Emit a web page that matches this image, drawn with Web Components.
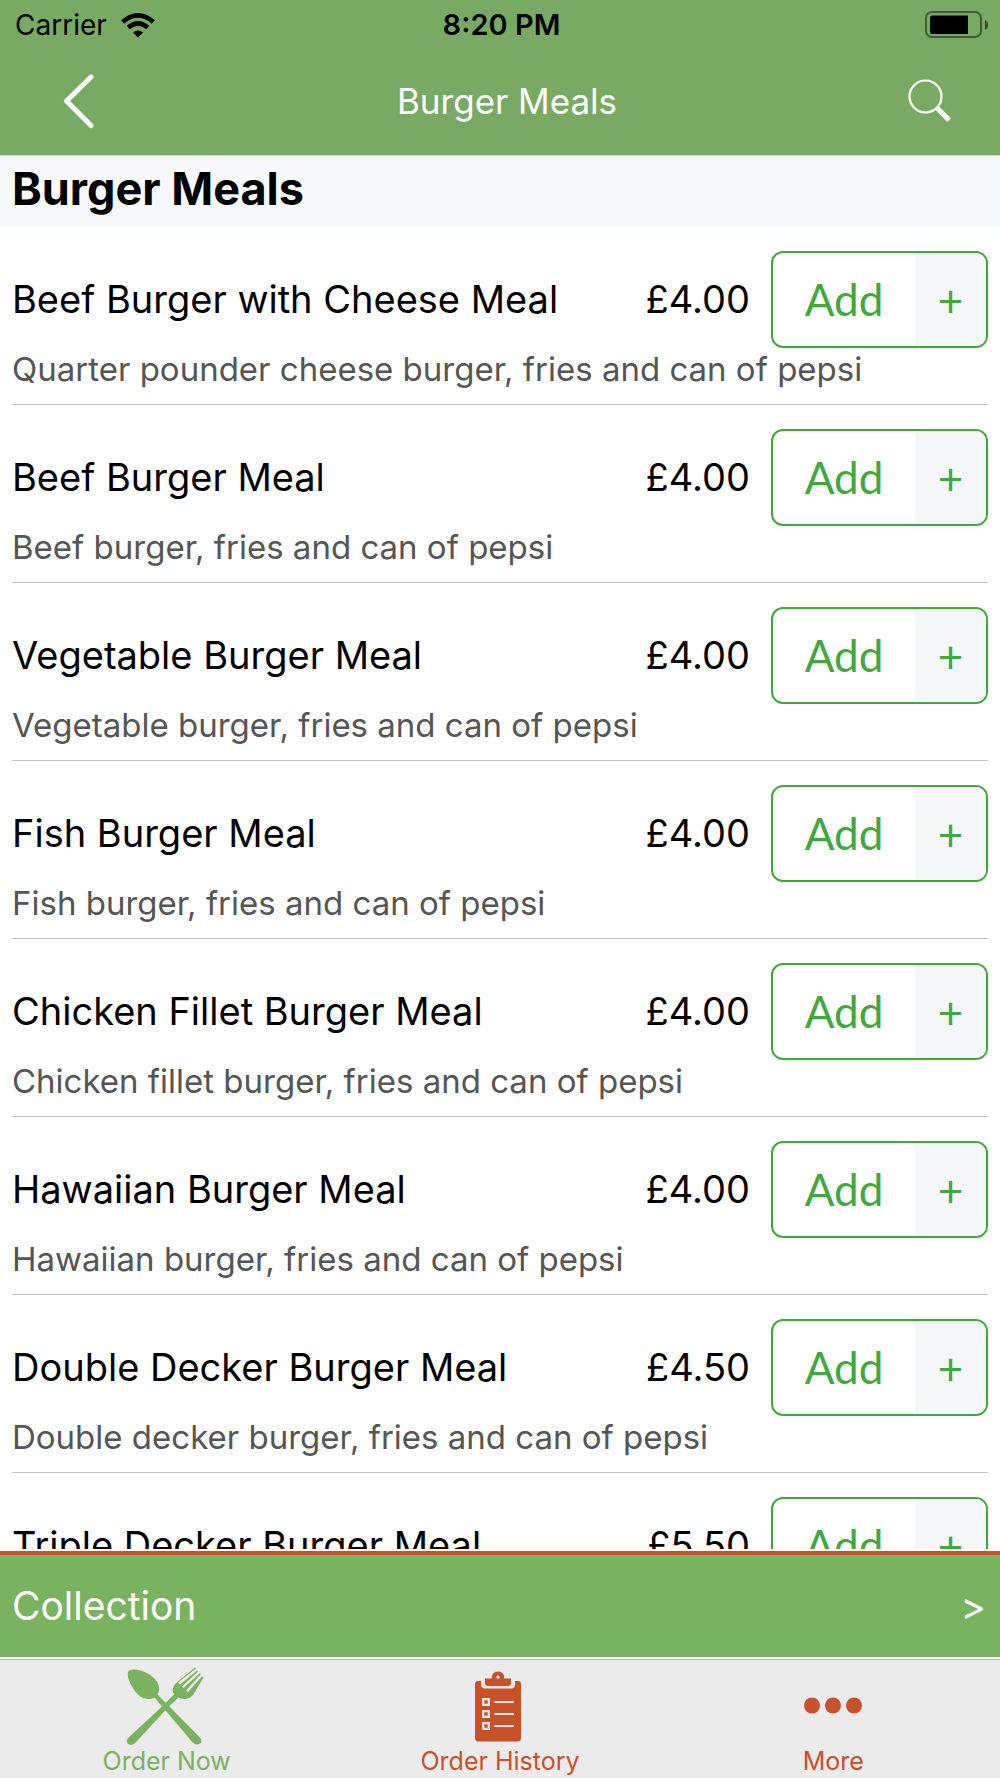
<!DOCTYPE html>
<html lang="en">
<head>
<meta charset="utf-8">
<meta name="viewport" content="width=device-width, initial-scale=1">
<title>Burger Meals</title>
<style>
  html, body { margin: 0; height: 100%; }
  body { background: #fff; color: #000; font-family: Inter, "Open Sans", sans-serif; }
</style>
</head>
<body>
<menu-app></menu-app>

<template id="status-bar">
  <style>
    :host { display: grid; grid-template-columns: 1fr auto 1fr; align-items: center; height: 50px; padding: 0 12px 0 15px; font: 400 28px/50px Inter, sans-serif; color: #000; }
    .left { display: flex; align-items: center; gap: 14px; }
    .time { font-weight: 600; font-size: 29px; }
    svg { display: block; }
    .battery { justify-self: end; }
  </style>
  <div class="left"><span>Carrier</span>
    <svg width="34" height="25" viewBox="0 0 34 25" aria-hidden="true"><g fill="none" stroke="#000" stroke-width="4.6"><path d="M1.7 9Q17-4.2 32.3 9"/><path d="M7.2 14.6Q17 6.2 26.8 14.6"/></g><path d="M12 19.6Q17 15.4 22 19.6L17 24.6Z"/></svg>
  </div>
  <span class="time">8:20 PM</span>
  <svg class="battery" width="63" height="28" viewBox="0 0 63 28" aria-hidden="true"><rect x="1" y="1" width="55" height="25" rx="6" fill="none" stroke="#000" stroke-opacity=".45" stroke-width="2"/><path d="M7 4.600H43V23H7Q5 23 5 20.500V7Q5 4.600 7 4.600Z"/><path d="M60 9Q63 10 63 14T60 19Z" fill-opacity=".55"/></svg>
</template>

<template id="nav-bar">
  <style>
    :host { display: grid; grid-template-columns: 1fr auto 1fr; align-items: center; height: 101px; padding: 0 48px 4px 62px; border-bottom: 1px solid #cfd3d0; color: #fff; }
    h1 { margin: 0; font-size: 35px; line-height: 48px; font-weight: 400; }
    button { all: unset; display: block; cursor: pointer; }
    .end { justify-self: end; }
    svg { display: block; }
  </style>
  <button aria-label="Back"><svg width="34" height="56" viewBox="0 0 34 56"><path d="M29 4 4.500 28 29 52.500" fill="none" stroke="#fff" stroke-width="5" stroke-linecap="round" stroke-linejoin="round"/></svg></button>
  <h1><slot></slot></h1>
  <button class="end" aria-label="Search"><svg width="44" height="44" viewBox="0 0 44 44" fill="none" stroke="#fff"><circle cx="17.500" cy="17.500" r="16" stroke-width="2.200"/><path d="M28.500 28.500 41 41" stroke-width="5"/></svg></button>
</template>

<template id="add-control">
  <style>
    :host { display: flex; box-sizing: border-box; width: 217px; height: 97px; border: 2px solid #43a73f; border-radius: 12px; overflow: hidden; background: #fff; }
    button { all: unset; cursor: pointer; text-align: center; color: #43a73f; font: 400 44px/52px Lato, sans-serif; }
    .add { flex: 1; padding-bottom: 2px; }
    .more { width: 71px; background: #f4f6f8; }
  </style>
  <button class="add">Add</button><button class="more" aria-label="Add more">+</button>
</template>

<template id="menu-item">
  <style>
    :host { display: block; flex: none; margin: 0 12px; padding: 24px 0 14px; border-bottom: 1px solid #c0c0c0; }
    .top { display: flex; align-items: center; }
    h3, .price { margin: 0; padding-bottom: 2px; font-size: 38px; line-height: 48px; font-weight: 400; white-space: nowrap; }
    h3 { flex: 1; }
    .price { margin-right: 21px; }
    p { margin: 0; font-size: 33px; line-height: 42px; color: #555; white-space: nowrap; }
  </style>
  <div class="top"><h3><slot name="name"></slot></h3><span class="price"><slot name="price"></slot></span><add-control></add-control></div>
  <p><slot></slot></p>
</template>

<template id="basket-bar">
  <style>
    :host { display: block; border-top: 4px solid #c8512a; background: #7ab360; }
    button { all: unset; box-sizing: border-box; display: flex; width: 100%; height: 102px; padding: 0 14px 0 12px; align-items: center; justify-content: space-between; color: #fff; font: 400 39px/48px Inter, sans-serif; cursor: pointer; }
    .go { font-size: 38px; }
  </style>
  <button><span><slot></slot></span><span class="go">&gt;</span></button>
</template>

<template id="tab-link">
  <style>
    :host { display: block; flex: 1; }
    a { display: flex; flex-direction: column; align-items: center; padding-top: 7px; color: var(--tint, #c8512a); text-decoration: none; font-size: 25px; line-height: 32px; }
  </style>
  <a href="#"><slot name="icon"></slot><span><slot></slot></span></a>
</template>

<template id="menu-app">
  <style>
    :host { display: flex; flex-direction: column; height: 100vh; overflow: hidden; }
    header { background: #79aa64; }
    main { flex: 1; min-height: 0; display: flex; flex-direction: column; overflow: hidden; }
    h2 { flex: none; margin: 0; padding: 5px 12px 10px; background: #f6f8fa; font-size: 45px; line-height: 56px; font-weight: 700; }
    basket-bar { margin: 2px 0; }
    nav { display: flex; box-sizing: border-box; height: 119px; border-top: 1px solid #bdbdbd; background: #ebebeb; }
    svg { display: block; fill: currentColor; }
  </style>
  <header><status-bar></status-bar><nav-bar>Burger Meals</nav-bar></header>
  <main><h2>Burger Meals</h2></main>
  <basket-bar>Collection</basket-bar>
  <nav>
    <tab-link style="--tint:#7ab360"><svg slot="icon" width="82" height="78" viewBox="0 0 82 78" aria-hidden="true"><path d="M3 3.500C11-.500 26 7 31 14.500Q35 22 31.500 27.500L72 68.500Q78.500 75 73 77Q69 79 65 73.500L28.500 30.500C20 35 11 29 6.500 20.500C2 12.500.5 6 3 3.500Z"/><path d="M52.500 30.500Q61 34.500 67 28L77.500 10.500 76 9.500 62 25 60 23.500 75 7 74 6 57.500 21 56 19.500 72 4.500 71 3.500 54 17.500 52 15.500 70 1.500 69 .500 50.500 15.500Q44.500 22 48 27.500L34.500 41 2.500 70.500Q-1.500 75 3 77.500 7 79 11 74L41 41.500Z"/></svg>Order Now</tab-link>
    <tab-link><svg slot="icon" width="50" height="78" viewBox="0 0 50 78" aria-hidden="true"><path d="M3 14H6V17Q6 21.500 10 21.500H36Q40 21.500 40 17V14H43Q46 14 46 17V71Q46 74.500 42.500 74.500H3.500Q0 74.500 0 71V17Q0 14 3 14Z"/><path fill-rule="evenodd" d="M10 11.500H17V9Q18 4.500 23 4.500T29 9V11.500H36V16Q36 19 33 19H13Q10 19 10 16ZM23 8.500A1.600 1.600 0 1 0 23.010 8.500Z"/><g fill="none" stroke="#ebebeb" stroke-width="2.200"><path d="M8.200 32.200h5.600v5.600H8.200zM8.200 44.200h5.600v5.600H8.200zM8.200 56.200h5.600v5.600H8.200zM19.500 35H39M19.500 47H39M19.500 59H39"/></g></svg>Order History</tab-link>
    <tab-link><svg slot="icon" width="60" height="78" viewBox="0 0 60 78" aria-hidden="true"><circle cx="9" cy="38.500" r="8"/><circle cx="30" cy="38.500" r="8"/><circle cx="51" cy="38.500" r="8"/></svg>More</tab-link>
  </nav>
</template>

<script>
  const meals = [
    ["Beef Burger with Cheese Meal", "£4.00", "Quarter pounder cheese burger, fries and can of pepsi"],
    ["Beef Burger Meal", "£4.00", "Beef burger, fries and can of pepsi"],
    ["Vegetable Burger Meal", "£4.00", "Vegetable burger, fries and can of pepsi"],
    ["Fish Burger Meal", "£4.00", "Fish burger, fries and can of pepsi"],
    ["Chicken Fillet Burger Meal", "£4.00", "Chicken fillet burger, fries and can of pepsi"],
    ["Hawaiian Burger Meal", "£4.00", "Hawaiian burger, fries and can of pepsi"],
    ["Double Decker Burger Meal", "£4.50", "Double decker burger, fries and can of pepsi"],
    ["Triple Decker Burger Meal", "£5.50", ""]
  ];

  class TemplateElement extends HTMLElement {
    constructor() {
      super();
      const template = document.getElementById(this.localName);
      this.attachShadow({ mode: "open" }).append(template.content.cloneNode(true));
    }
  }

  customElements.define("status-bar", class extends TemplateElement {});
  customElements.define("nav-bar", class extends TemplateElement {});
  customElements.define("add-control", class extends TemplateElement {});
  customElements.define("menu-item", class extends TemplateElement {});
  customElements.define("basket-bar", class extends TemplateElement {});
  customElements.define("tab-link", class extends TemplateElement {
    connectedCallback() { this.style.color = "var(--tint, #c8512a)"; }
  });
  customElements.define("menu-app", class extends TemplateElement {
    connectedCallback() {
      const list = this.shadowRoot.querySelector("main");
      for (const [name, price, description] of meals) {
        const item = document.createElement("menu-item");
        const nameEl = document.createElement("span");
        nameEl.slot = "name";
        nameEl.textContent = name;
        const priceEl = document.createElement("span");
        priceEl.slot = "price";
        priceEl.textContent = price;
        item.append(nameEl, priceEl, description);
        list.append(item);
      }
    }
  });
</script>
</body>
</html>
